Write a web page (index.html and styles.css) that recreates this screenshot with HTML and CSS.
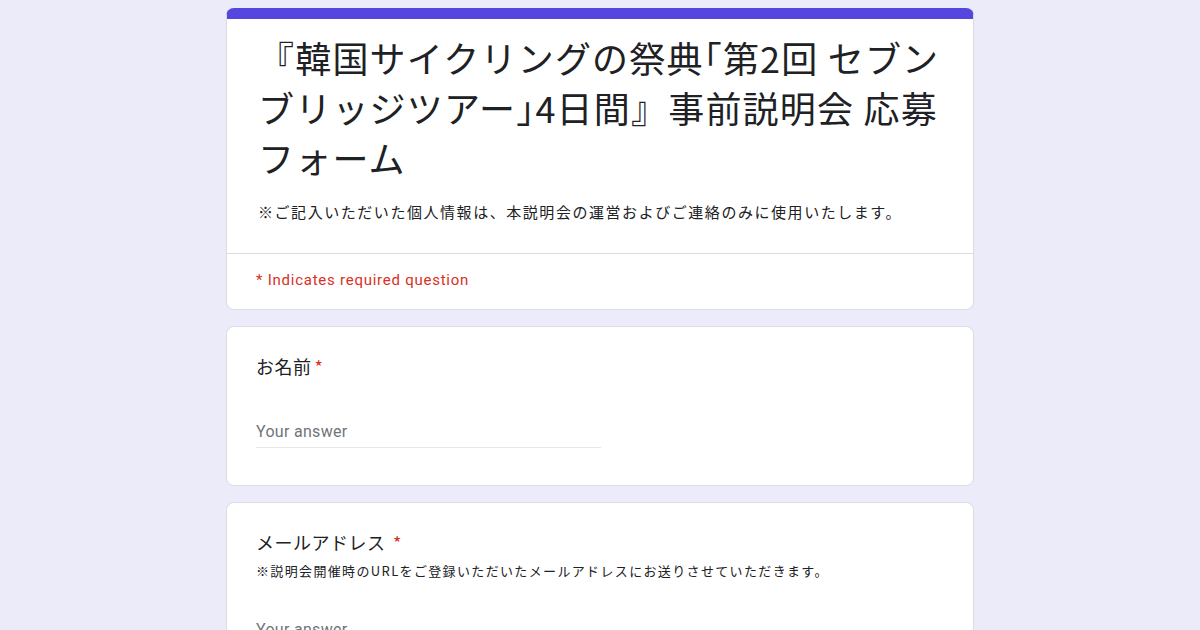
FILE: index.html
```html
<!DOCTYPE html>
<html lang="ja">
<head>
<meta charset="utf-8">
<title>応募フォーム</title>
<link rel="stylesheet" href="styles.css">
</head>
<body>
<main class="form">
  <section class="card header-card">
    <div class="header-main">
      <h1 class="title">『韓国サイクリングの祭典｢第2回 セブンブリッジツアー｣4日間』事前説明会 応募フォーム</h1>
      <p class="desc">※ご記入いただいた個人情報は、本説明会の運営およびご連絡のみに使用いたします。</p>
    </div>
    <div class="required-note">* Indicates required question</div>
  </section>

  <section class="card question">
    <div class="q-title">お名前<span class="star">*</span></div>
    <div class="answer">Your answer</div>
  </section>

  <section class="card question">
    <div class="q-title">メールアドレス <span class="star">*</span></div>
    <div class="q-desc">※説明会開催時のURLをご登録いただいたメールアドレスにお送りさせていただきます。</div>
    <div class="answer answer-late">Your answer</div>
  </section>
</main>
</body>
</html>
```

FILE: styles.css
```css
html, body {
  margin: 0;
  padding: 0;
}
body {
  background: #ecebfa;
  font-family: "Noto Sans CJK JP", "Noto Sans", sans-serif;
  color: #202124;
  height: 630px;
  overflow: hidden;
}
.form {
  width: 748px;
  margin: 0 auto;
  padding-top: 8px;
  display: flex;
  flex-direction: column;
  gap: 16px;
}
.card {
  background: #fff;
  border: 1px solid #dadce0;
  border-radius: 8px;
  box-sizing: border-box;
}
.header-card {
  border-top: 11px solid #5546e0;
}
.header-main {
  padding: 13px 26px 30px 31px;
  border-bottom: 1px solid #dadce0;
}
.title {
  margin: 0;
  font-size: 36px;
  font-weight: 400;
  line-height: 50px;
  letter-spacing: 1.2px;
  color: #202124;
}
.desc {
  margin: 19px 0 0;
  font-size: 15px;
  line-height: 22px;
  letter-spacing: 1.55px;
}
.required-note {
  padding: 15px 32px 18px 29px;
  font-family: Roboto, "Noto Sans", sans-serif;
  font-size: 15px;
  line-height: 22px;
  letter-spacing: 0.75px;
  color: #d93025;
}
.question {
  padding: 27px 32px 37px 29px;
}
.q-title {
  font-size: 18px;
  line-height: 24px;
  letter-spacing: 0.5px;
}
.star {
  color: #d93025;
  margin-left: 3px;
}
.q-desc {
  margin-top: 8px;
  font-size: 13px;
  line-height: 18px;
  letter-spacing: 1.35px;
}
.answer {
  margin-top: 42px;
  width: 345px;
  padding-bottom: 3px;
  border-bottom: 1px solid #e8e8ea;
  font-family: Roboto, "Noto Sans", sans-serif;
  font-size: 16px;
  line-height: 24px;
  letter-spacing: 0.3px;
  color: #70757a;
}
.answer-late {
  margin-top: 38px;
}
```
